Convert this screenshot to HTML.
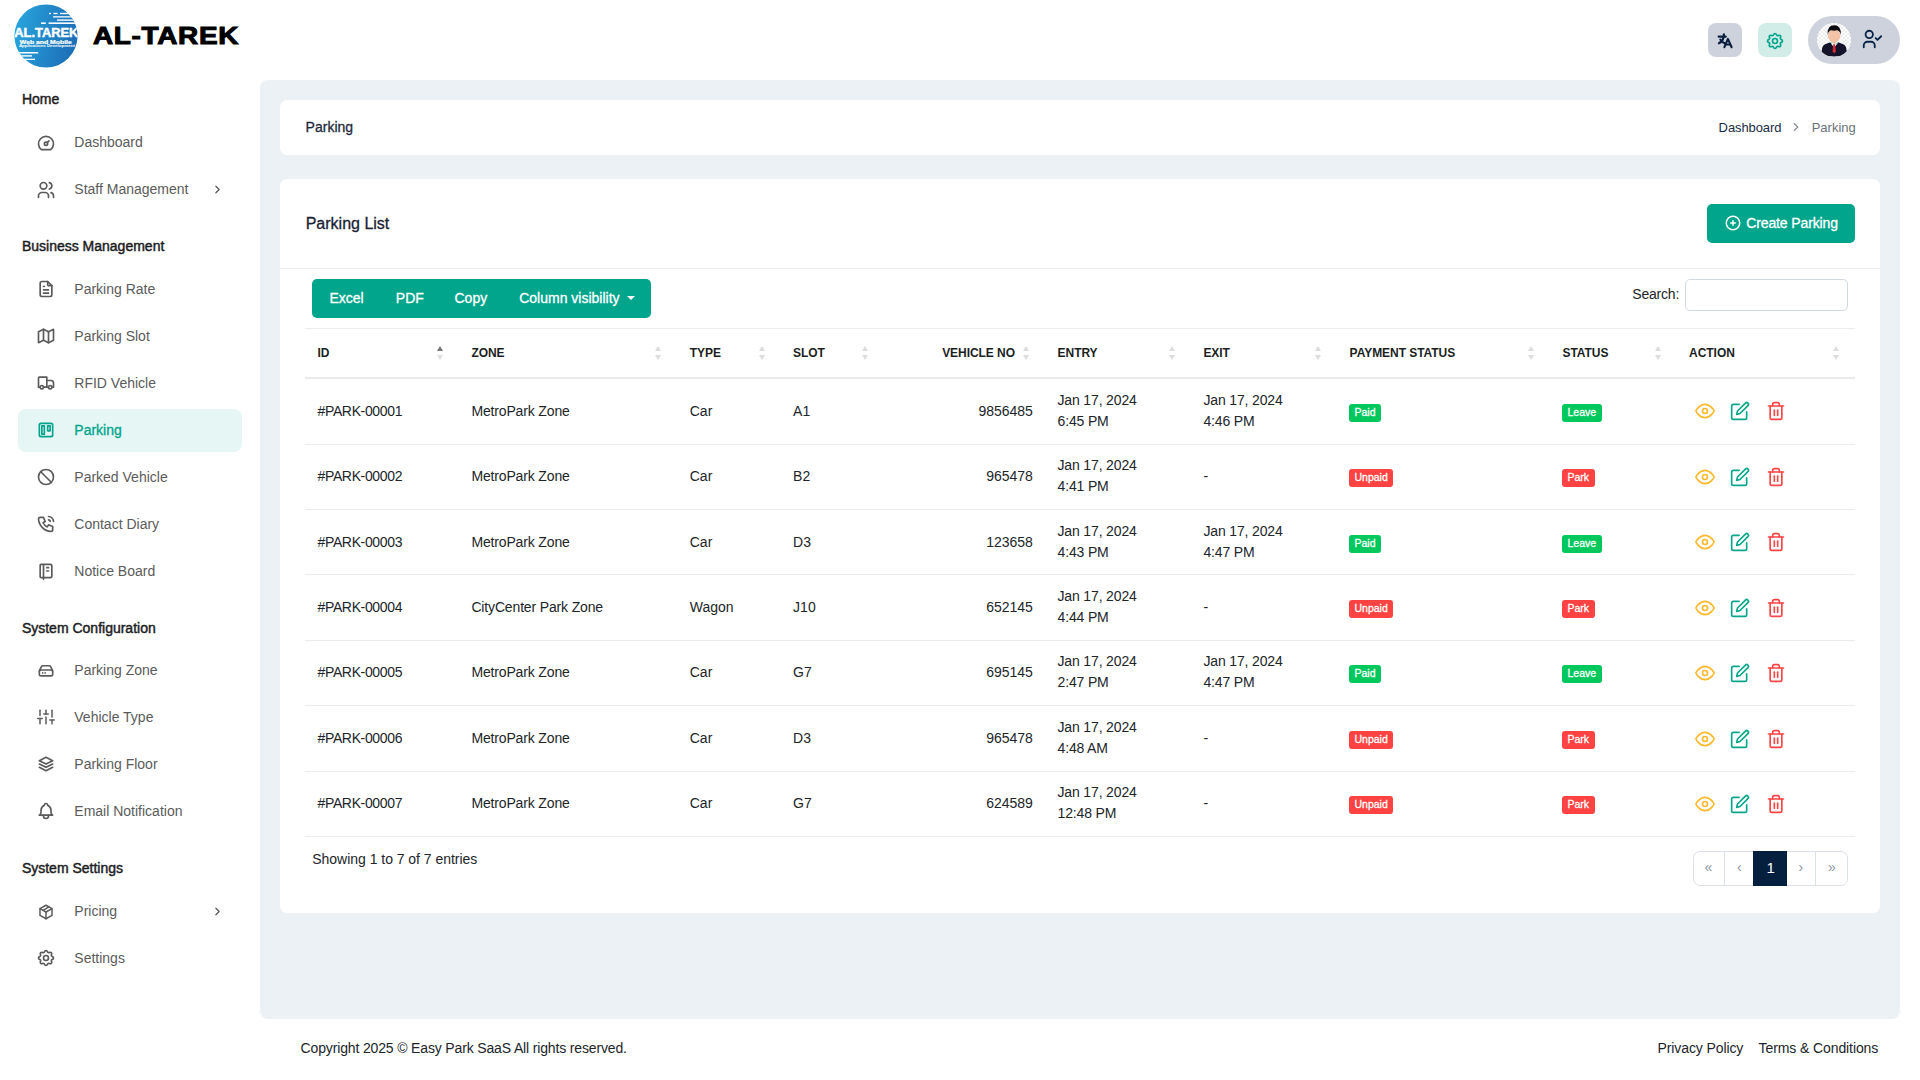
<!DOCTYPE html>
<html lang="en"><head><meta charset="utf-8"><title>Parking - Easy Park SaaS</title>
<style>
*{box-sizing:border-box;margin:0;padding:0}
html,body{width:1920px;height:1080px;overflow:hidden;background:#ffffff;font-family:"Liberation Sans",sans-serif;}
.abs{position:absolute}
.med{-webkit-text-stroke:0.3px currentColor}
</style></head><body>

<header class="topbar" style="display:contents">
<svg class="abs" style="left:14px;top:4px" width="64" height="64" viewBox="0 0 64 64">
<defs><linearGradient id="lg" x1="0" y1="0" x2="1" y2="0.2"><stop offset="0" stop-color="#2aa8df"/><stop offset="1" stop-color="#1c70b8"/></linearGradient>
<clipPath id="cc"><circle cx="32" cy="32" r="31.6"/></clipPath></defs>
<circle cx="32" cy="32" r="31.6" fill="url(#lg)"/>
<g clip-path="url(#cc)" fill="#ffffff">
<rect x="35" y="8.8" width="2" height="1.4"/><rect x="39.5" y="8.8" width="4.1" height="1.4"/><rect x="46" y="8.8" width="20" height="1.4"/>
<rect x="39.1" y="12.2" width="27" height="1.3"/><rect x="43" y="15.4" width="23" height="1.4"/>
<rect x="27" y="18.4" width="4.8" height="1.6"/><rect x="34.6" y="18.4" width="32" height="1.6"/>
<rect x="0" y="48" width="24.2" height="1.5"/><rect x="0" y="51.2" width="18" height="1.4"/><rect x="0" y="54.7" width="21" height="1.3"/>
</g>
<g clip-path="url(#cc)"><text x="32.3" y="33.2" text-anchor="middle" font-family="Liberation Sans" font-weight="700" font-size="13" fill="#ffffff" stroke="#ffffff" stroke-width="0.5" textLength="64" lengthAdjust="spacingAndGlyphs">AL.TAREK</text>
<text x="31.8" y="39.8" text-anchor="middle" font-family="Liberation Sans" font-weight="700" font-size="5" fill="#ffffff" stroke="#ffffff" stroke-width="0.2" textLength="52" lengthAdjust="spacingAndGlyphs">Web and Mobile</text>
<text x="32.9" y="42.9" text-anchor="middle" font-family="Liberation Sans" font-weight="700" font-size="2.8" fill="#ffffff" textLength="56" lengthAdjust="spacingAndGlyphs">Applications Development</text></g>
</svg>
<div class="abs" style="left:92.8px;top:23.6px;font-size:24.5px;line-height:24.5px;font-weight:700;color:#000;-webkit-text-stroke:1px #000;letter-spacing:0.6px;transform-origin:0 0;transform:scaleX(1.14);white-space:nowrap">AL-TAREK</div>
<div class="abs" style="left:1708px;top:23px;width:34px;height:34px;border-radius:8px;background:#ced2dc"></div>
<svg class="abs" style="left:1712px;top:28px" width="26" height="26" viewBox="0 0 26 26" fill="none" stroke="#0a1f3f" stroke-width="2.1" stroke-linecap="round" stroke-linejoin="round"><path d="M11.9 6.2v2"/><path d="M6.6 8.6h7.2"/><path d="M11.6 9.2Q10.6 13.6 6.9 15.3"/><path d="M8.3 11.6Q10 14.6 13.2 15.6"/><path d="M12.4 19.2L15.9 10.9L19.6 19.2"/><path d="M13.6 16.5h4.6"/></svg>
<div class="abs" style="left:1758px;top:23px;width:34px;height:34px;border-radius:8px;background:#d2ede8"></div>
<svg style="position:absolute;left:1765.00px;top:31.00px;" width="20" height="20" viewBox="0 0 24 24" fill="none" stroke="#00a58c" stroke-width="2" stroke-linecap="round" stroke-linejoin="round"><path d="M10.325 4.317c.426 -1.756 2.924 -1.756 3.35 0a1.724 1.724 0 0 0 2.573 1.066c1.543 -.94 3.31 .826 2.37 2.37a1.724 1.724 0 0 0 1.065 2.572c1.756 .426 1.756 2.924 0 3.35a1.724 1.724 0 0 0 -1.066 2.573c.94 1.543 -.826 3.31 -2.37 2.37a1.724 1.724 0 0 0 -2.572 1.065c-.426 1.756 -2.924 1.756 -3.35 0a1.724 1.724 0 0 0 -2.573 -1.066c-1.543 .94 -3.31 -.826 -2.37 -2.37a1.724 1.724 0 0 0 -1.065 -2.572c-1.756 -.426 -1.756 -2.924 0 -3.35a1.724 1.724 0 0 0 1.066 -2.573c-.94 -1.543 .826 -3.31 2.37 -2.37c1 .608 2.296 .07 2.572 -1.065z"/><path d="M9 12a3 3 0 1 0 6 0a3 3 0 0 0 -6 0"/></svg>
<div class="abs" style="left:1808px;top:16px;width:92px;height:48px;border-radius:24px;background:#ced2dc"></div>
<svg class="abs" style="left:1817px;top:23px" width="34" height="34" viewBox="0 0 34 34">
<defs><clipPath id="av"><circle cx="17" cy="17" r="17"/></clipPath>
<pattern id="chk" width="4" height="4" patternUnits="userSpaceOnUse"><rect width="4" height="4" fill="#ffffff"/><rect width="2" height="2" fill="#ededed"/><rect x="2" y="2" width="2" height="2" fill="#ededed"/></pattern></defs>
<circle cx="17" cy="17" r="17" fill="url(#chk)"/>
<g clip-path="url(#av)">
<rect x="14.4" y="15.5" width="5.6" height="5.5" fill="#e9b896"/>
<path d="M4 31.5 L5.3 24.5 Q6.3 21.2 10.8 20.2 L13.3 19.3 L17.2 24.5 L21.1 19.3 L23.6 20.2 Q28.1 21.2 29.1 24.5 L30.4 31.5 Q17.2 35.5 4 31.5 Z" fill="#15132a"/>
<path d="M13.3 19.3 L17.2 24.8 L21.1 19.3 L20 18.8 L17.2 21 L14.4 18.8 Z" fill="#e6f3f3"/>
<path d="M13.3 19.3 L15.2 22 L14.6 19.4 Z" fill="#5cc4c8"/><path d="M21.1 19.3 L19.2 22 L19.8 19.4 Z" fill="#5cc4c8"/>
<path d="M16.3 21.2 L18.1 21.2 L18.8 28.2 L17.2 30.6 L15.6 28.2 Z" fill="#d42a36"/>
<ellipse cx="17.2" cy="12.8" rx="6.2" ry="6.6" fill="#f2c4a5"/>
<path d="M10.7 12 Q9.8 2.2 17.2 2.2 Q24.6 2.2 23.7 12 Q23 7.8 20 7.3 Q17.2 8.2 14.2 7.3 Q11.4 7.8 10.7 12 Z" fill="#0c0c10"/>
</g></svg>
<svg style="position:absolute;left:1860.90px;top:28.00px;" width="22" height="22" viewBox="0 0 24 24" fill="none" stroke="#0a2447" stroke-width="2" stroke-linecap="round" stroke-linejoin="round"><path d="M9 7m-4 0a4 4 0 1 0 8 0a4 4 0 1 0 -8 0"/><path d="M3 21v-2a4 4 0 0 1 4 -4h4a4 4 0 0 1 4 4v2"/><path d="M16 11l2 2l4 -4"/></svg>
</header>
<aside class="sidebar" style="display:contents"><nav style="display:contents">
<div style="position:absolute;left:21.90px;top:92.25px;font-size:14px;line-height:14px;color:#1d1d1f;font-weight:400;white-space:nowrap;-webkit-text-stroke:0.45px currentColor">Home</div>
<div style="position:absolute;left:21.90px;top:238.75px;font-size:14px;line-height:14px;color:#1d1d1f;font-weight:400;white-space:nowrap;-webkit-text-stroke:0.45px currentColor">Business Management</div>
<div style="position:absolute;left:21.90px;top:620.95px;font-size:14px;line-height:14px;color:#1d1d1f;font-weight:400;white-space:nowrap;-webkit-text-stroke:0.45px currentColor">System Configuration</div>
<div style="position:absolute;left:21.90px;top:861.25px;font-size:14px;line-height:14px;color:#1d1d1f;font-weight:400;white-space:nowrap;-webkit-text-stroke:0.45px currentColor">System Settings</div>
<svg style="position:absolute;left:36.00px;top:132.70px;" width="20" height="20" viewBox="0 0 24 24" fill="none" stroke="#5b5b5b" stroke-width="2" stroke-linecap="round" stroke-linejoin="round"><path d="M12 13m-2 0a2 2 0 1 0 4 0a2 2 0 1 0 -4 0"/><path d="M13.45 11.55l2.05 -2.05"/><path d="M6.4 20a9 9 0 1 1 11.2 0z"/></svg>
<div style="position:absolute;left:74.30px;top:135.15px;font-size:14px;line-height:14px;color:#5b5b5b;font-weight:400;white-space:nowrap;">Dashboard</div>
<svg style="position:absolute;left:36.00px;top:179.70px;" width="20" height="20" viewBox="0 0 24 24" fill="none" stroke="#5b5b5b" stroke-width="2" stroke-linecap="round" stroke-linejoin="round"><path d="M9 7m-4 0a4 4 0 1 0 8 0a4 4 0 1 0 -8 0"/><path d="M3 21v-2a4 4 0 0 1 4 -4h4a4 4 0 0 1 4 4v2"/><path d="M16 3.13a4 4 0 0 1 0 7.75"/><path d="M21 21v-2a4 4 0 0 0 -3 -3.85"/></svg>
<div style="position:absolute;left:74.30px;top:182.15px;font-size:14px;line-height:14px;color:#5b5b5b;font-weight:400;white-space:nowrap;">Staff Management</div>
<svg style="position:absolute;left:210.80px;top:183.10px;" width="13" height="13" viewBox="0 0 24 24" fill="none" stroke="#555" stroke-width="2.2" stroke-linecap="round" stroke-linejoin="round"><path d="M9 6l6 6l-6 6"/></svg>
<svg style="position:absolute;left:36.00px;top:279.40px;" width="20" height="20" viewBox="0 0 24 24" fill="none" stroke="#5b5b5b" stroke-width="2" stroke-linecap="round" stroke-linejoin="round"><path d="M14 3v4a1 1 0 0 0 1 1h4"/><path d="M17 21h-10a2 2 0 0 1 -2 -2v-14a2 2 0 0 1 2 -2h7l5 5v11a2 2 0 0 1 -2 2z"/><path d="M9 9l1 0"/><path d="M9 13l6 0"/><path d="M9 17l6 0"/></svg>
<div style="position:absolute;left:74.30px;top:281.85px;font-size:14px;line-height:14px;color:#5b5b5b;font-weight:400;white-space:nowrap;">Parking Rate</div>
<svg style="position:absolute;left:36.00px;top:326.40px;" width="20" height="20" viewBox="0 0 24 24" fill="none" stroke="#5b5b5b" stroke-width="2" stroke-linecap="round" stroke-linejoin="round"><path d="M3 7l6 -3l6 3l6 -3v13l-6 3l-6 -3l-6 3v-13"/><path d="M9 4v13"/><path d="M15 7v13"/></svg>
<div style="position:absolute;left:74.30px;top:328.85px;font-size:14px;line-height:14px;color:#5b5b5b;font-weight:400;white-space:nowrap;">Parking Slot</div>
<svg style="position:absolute;left:36.00px;top:373.40px;" width="20" height="20" viewBox="0 0 24 24" fill="none" stroke="#5b5b5b" stroke-width="2" stroke-linecap="round" stroke-linejoin="round"><path d="M7 17m-2 0a2 2 0 1 0 4 0a2 2 0 1 0 -4 0"/><path d="M17 17m-2 0a2 2 0 1 0 4 0a2 2 0 1 0 -4 0"/><path d="M5 17h-2v-11a1 1 0 0 1 1 -1h9v12m-4 0h6m4 0h2v-5a3 3 0 0 0 -3 -3h-5"/></svg>
<div style="position:absolute;left:74.30px;top:375.85px;font-size:14px;line-height:14px;color:#5b5b5b;font-weight:400;white-space:nowrap;">RFID Vehicle</div>
<div class="abs" style="left:18px;top:409px;width:224px;height:42.5px;border-radius:8px;background:#e5f6f4"></div>
<svg style="position:absolute;left:36.00px;top:420.45px;" width="20" height="20" viewBox="0 0 24 24" fill="none" stroke="#00a58c" stroke-width="2" stroke-linecap="round" stroke-linejoin="round"><path d="M4 6a2 2 0 0 1 2 -2h12a2 2 0 0 1 2 2v12a2 2 0 0 1 -2 2h-12a2 2 0 0 1 -2 -2z"/><path d="M7 7h3v10h-3z"/><path d="M14 7h3v6h-3z"/></svg>
<div class="med" style="position:absolute;left:74.30px;top:422.90px;font-size:14px;line-height:14px;color:#00a58c;font-weight:400;white-space:nowrap;">Parking</div>
<svg style="position:absolute;left:36.00px;top:467.40px;" width="20" height="20" viewBox="0 0 24 24" fill="none" stroke="#5b5b5b" stroke-width="2" stroke-linecap="round" stroke-linejoin="round"><path d="M12 12m-9 0a9 9 0 1 0 18 0a9 9 0 1 0 -18 0"/><path d="M5.7 5.7l12.6 12.6"/></svg>
<div style="position:absolute;left:74.30px;top:469.85px;font-size:14px;line-height:14px;color:#5b5b5b;font-weight:400;white-space:nowrap;">Parked Vehicle</div>
<svg style="position:absolute;left:36.00px;top:514.40px;" width="20" height="20" viewBox="0 0 24 24" fill="none" stroke="#5b5b5b" stroke-width="2" stroke-linecap="round" stroke-linejoin="round"><path d="M5 4h4l2 5l-2.5 1.5a11 11 0 0 0 5 5l1.5 -2.5l5 2v4a2 2 0 0 1 -2 2a16 16 0 0 1 -15 -15a2 2 0 0 1 2 -2"/><path d="M15 7a2 2 0 0 1 2 2"/><path d="M15 3a6 6 0 0 1 6 6"/></svg>
<div style="position:absolute;left:74.30px;top:516.85px;font-size:14px;line-height:14px;color:#5b5b5b;font-weight:400;white-space:nowrap;">Contact Diary</div>
<svg style="position:absolute;left:36.00px;top:561.40px;" width="20" height="20" viewBox="0 0 24 24" fill="none" stroke="#5b5b5b" stroke-width="2" stroke-linecap="round" stroke-linejoin="round"><path d="M6 4h11a2 2 0 0 1 2 2v12a2 2 0 0 1 -2 2h-11a1 1 0 0 1 -1 -1v-14a1 1 0 0 1 1 -1m3 0v18"/><path d="M13 8l2 0"/><path d="M13 12l2 0"/></svg>
<div style="position:absolute;left:74.30px;top:563.85px;font-size:14px;line-height:14px;color:#5b5b5b;font-weight:400;white-space:nowrap;">Notice Board</div>
<svg style="position:absolute;left:36.00px;top:660.40px;" width="20" height="20" viewBox="0 0 24 24" fill="none" stroke="#5b5b5b" stroke-width="2" stroke-linecap="round" stroke-linejoin="round"><path d="M4 14a2 2 0 0 1 2 -2h12a2 2 0 0 1 2 2v3a2 2 0 0 1 -2 2h-12a2 2 0 0 1 -2 -2z"/><path d="M4 13l2.5 -5a2 2 0 0 1 1.8 -1.1h7.4a2 2 0 0 1 1.8 1.1l2.5 5"/><path d="M8 15.5v.01"/><path d="M11 15.5v.01"/></svg>
<div style="position:absolute;left:74.30px;top:662.85px;font-size:14px;line-height:14px;color:#5b5b5b;font-weight:400;white-space:nowrap;">Parking Zone</div>
<svg style="position:absolute;left:37.00px;top:708.40px;" width="18" height="18" viewBox="0 0 24 24" fill="none" stroke="#5b5b5b" stroke-width="2" stroke-linecap="round" stroke-linejoin="round"><path d="M4 21v-7"/><path d="M4 10v-7"/><path d="M12 21v-9"/><path d="M12 8v-5"/><path d="M20 21v-5"/><path d="M20 12v-9"/><path d="M1 14h6"/><path d="M9 8h6"/><path d="M17 16h6"/></svg>
<div style="position:absolute;left:74.30px;top:709.85px;font-size:14px;line-height:14px;color:#5b5b5b;font-weight:400;white-space:nowrap;">Vehicle Type</div>
<svg style="position:absolute;left:36.00px;top:754.40px;" width="20" height="20" viewBox="0 0 24 24" fill="none" stroke="#5b5b5b" stroke-width="2" stroke-linecap="round" stroke-linejoin="round"><path d="M12 4l-8 4l8 4l8 -4l-8 -4"/><path d="M4 12l8 4l8 -4"/><path d="M4 16l8 4l8 -4"/></svg>
<div style="position:absolute;left:74.30px;top:756.85px;font-size:14px;line-height:14px;color:#5b5b5b;font-weight:400;white-space:nowrap;">Parking Floor</div>
<svg style="position:absolute;left:36.00px;top:801.40px;" width="20" height="20" viewBox="0 0 24 24" fill="none" stroke="#5b5b5b" stroke-width="2" stroke-linecap="round" stroke-linejoin="round"><path d="M10 5a2 2 0 1 1 4 0a7 7 0 0 1 4 6v3a4 4 0 0 0 2 3h-16a4 4 0 0 0 2 -3v-3a7 7 0 0 1 4 -6"/><path d="M9 17v1a3 3 0 0 0 6 0v-1"/></svg>
<div style="position:absolute;left:74.30px;top:803.85px;font-size:14px;line-height:14px;color:#5b5b5b;font-weight:400;white-space:nowrap;">Email Notification</div>
<svg style="position:absolute;left:37.00px;top:902.50px;" width="18" height="18" viewBox="0 0 24 24" fill="none" stroke="#5b5b5b" stroke-width="2" stroke-linecap="round" stroke-linejoin="round"><path d="M12 3l8 4.5l0 9l-8 4.5l-8 -4.5l0 -9l8 -4.5"/><path d="M12 12l8 -4.5"/><path d="M12 12l0 9"/><path d="M12 12l-8 -4.5"/><path d="M16 5.25l-8 4.5"/></svg>
<div style="position:absolute;left:74.30px;top:903.95px;font-size:14px;line-height:14px;color:#5b5b5b;font-weight:400;white-space:nowrap;">Pricing</div>
<svg style="position:absolute;left:210.80px;top:904.90px;" width="13" height="13" viewBox="0 0 24 24" fill="none" stroke="#555" stroke-width="2.2" stroke-linecap="round" stroke-linejoin="round"><path d="M9 6l6 6l-6 6"/></svg>
<svg style="position:absolute;left:36.00px;top:948.20px;" width="20" height="20" viewBox="0 0 24 24" fill="none" stroke="#5b5b5b" stroke-width="2" stroke-linecap="round" stroke-linejoin="round"><path d="M10.325 4.317c.426 -1.756 2.924 -1.756 3.35 0a1.724 1.724 0 0 0 2.573 1.066c1.543 -.94 3.31 .826 2.37 2.37a1.724 1.724 0 0 0 1.065 2.572c1.756 .426 1.756 2.924 0 3.35a1.724 1.724 0 0 0 -1.066 2.573c.94 1.543 -.826 3.31 -2.37 2.37a1.724 1.724 0 0 0 -2.572 1.065c-.426 1.756 -2.924 1.756 -3.35 0a1.724 1.724 0 0 0 -2.573 -1.066c-1.543 .94 -3.31 -.826 -2.37 -2.37a1.724 1.724 0 0 0 -1.065 -2.572c-1.756 -.426 -1.756 -2.924 0 -3.35a1.724 1.724 0 0 0 1.066 -2.573c-.94 -1.543 .826 -3.31 2.37 -2.37c1 .608 2.296 .07 2.572 -1.065z"/><path d="M9 12a3 3 0 1 0 6 0a3 3 0 0 0 -6 0"/></svg>
<div style="position:absolute;left:74.30px;top:950.65px;font-size:14px;line-height:14px;color:#5b5b5b;font-weight:400;white-space:nowrap;">Settings</div>
</nav></aside>
<main class="content" style="display:contents">
<div class="abs" style="left:260px;top:80px;width:1640px;height:939px;border-radius:8px;background:#ecf1f5"></div>
<div class="abs" style="left:280px;top:100px;width:1600px;height:55px;border-radius:7px;background:#ffffff"></div>
<div class="med" style="position:absolute;left:305.60px;top:120.15px;font-size:14px;line-height:14px;color:#1e2a3b;font-weight:400;white-space:nowrap;">Parking</div>
<div style="position:absolute;left:1718.60px;top:120.70px;font-size:13px;line-height:13px;color:#1a2b45;font-weight:400;white-space:nowrap;letter-spacing:-0.1px">Dashboard</div>
<svg style="position:absolute;left:1789.00px;top:120.00px;" width="14" height="14" viewBox="0 0 24 24" fill="none" stroke="#8a8f98" stroke-width="2" stroke-linecap="round" stroke-linejoin="round"><path d="M9 6l6 6l-6 6"/></svg>
<div style="position:absolute;left:1811.70px;top:120.70px;font-size:13px;line-height:13px;color:#6c727b;font-weight:400;white-space:nowrap;">Parking</div>
<div class="abs" style="left:280px;top:179px;width:1600px;height:734px;border-radius:7px;background:#ffffff"></div>
<div class="med" style="position:absolute;left:305.70px;top:215.86px;font-size:16px;line-height:16px;color:#1a2233;font-weight:400;white-space:nowrap;">Parking List</div>
<div class="abs" style="left:1707px;top:204px;width:148px;height:39px;border-radius:5px;background:#00a58c"></div>
<svg style="position:absolute;left:1724.10px;top:214.00px;" width="18" height="18" viewBox="0 0 24 24" fill="none" stroke="#ffffff" stroke-width="2" stroke-linecap="round" stroke-linejoin="round"><path d="M3 12a9 9 0 1 0 18 0a9 9 0 0 0 -18 0"/><path d="M9 12h6"/><path d="M12 9v6"/></svg>
<div class="med" style="position:absolute;left:1746.20px;top:216.15px;font-size:14px;line-height:14px;color:#ffffff;font-weight:400;white-space:nowrap;letter-spacing:-0.12px">Create Parking</div>
<div class="abs" style="left:280px;top:268px;width:1600px;height:1px;background:#ececec"></div>
<div class="abs" style="left:312px;top:279px;width:339px;height:39px;border-radius:5px;background:#00a58c"></div>
<div class="med" style="position:absolute;left:329.50px;top:291.15px;font-size:14px;line-height:14px;color:#ffffff;font-weight:400;white-space:nowrap;">Excel</div>
<div class="med" style="position:absolute;left:395.80px;top:291.15px;font-size:14px;line-height:14px;color:#ffffff;font-weight:400;white-space:nowrap;">PDF</div>
<div class="med" style="position:absolute;left:454.50px;top:291.15px;font-size:14px;line-height:14px;color:#ffffff;font-weight:400;white-space:nowrap;">Copy</div>
<div class="med" style="position:absolute;left:519.20px;top:291.15px;font-size:14px;line-height:14px;color:#ffffff;font-weight:400;white-space:nowrap;">Column visibility</div>
<div class="abs" style="left:626.5px;top:295.5px;width:0;height:0;border-left:4px solid transparent;border-right:4px solid transparent;border-top:4.5px solid #fff"></div>
<div style="position:absolute;left:1632.25px;top:287.15px;font-size:14px;line-height:14px;color:#212529;font-weight:400;white-space:nowrap;letter-spacing:-0.2px">Search:</div>
<div class="abs" style="left:1685px;top:279px;width:163px;height:32px;border-radius:5px;border:1px solid #d3d9e0;background:#fff"></div>
<div class="abs" style="left:305px;top:328px;width:1550px;height:1px;background:#ececec"></div>
<div class="abs" style="left:305px;top:377px;width:1550px;height:2px;background:#eaeaea"></div>
<div class="abs" style="left:305px;top:444px;width:1550px;height:1px;background:#ebebeb"></div>
<div class="abs" style="left:305px;top:509px;width:1550px;height:1px;background:#ebebeb"></div>
<div class="abs" style="left:305px;top:574px;width:1550px;height:1px;background:#ebebeb"></div>
<div class="abs" style="left:305px;top:640px;width:1550px;height:1px;background:#ebebeb"></div>
<div class="abs" style="left:305px;top:705px;width:1550px;height:1px;background:#ebebeb"></div>
<div class="abs" style="left:305px;top:771px;width:1550px;height:1px;background:#ebebeb"></div>
<div class="abs" style="left:305px;top:836px;width:1550px;height:1px;background:#ebebeb"></div>
<div style="position:absolute;left:317.50px;top:347.04px;font-size:12px;line-height:12px;color:#1b1f24;font-weight:700;white-space:nowrap;letter-spacing:-0.05px">ID</div>
<div class="abs" style="left:437.20px;top:346.3px;width:0;height:0;border-left:3.2px solid transparent;border-right:3.2px solid transparent;border-bottom:5.5px solid #777777"></div>
<div class="abs" style="left:437.20px;top:355.2px;width:0;height:0;border-left:3.2px solid transparent;border-right:3.2px solid transparent;border-top:5.5px solid #dddddd"></div>
<div style="position:absolute;left:471.40px;top:347.04px;font-size:12px;line-height:12px;color:#1b1f24;font-weight:700;white-space:nowrap;letter-spacing:-0.05px">ZONE</div>
<div class="abs" style="left:655.20px;top:346.3px;width:0;height:0;border-left:3.2px solid transparent;border-right:3.2px solid transparent;border-bottom:5.5px solid #dddddd"></div>
<div class="abs" style="left:655.20px;top:355.2px;width:0;height:0;border-left:3.2px solid transparent;border-right:3.2px solid transparent;border-top:5.5px solid #dddddd"></div>
<div style="position:absolute;left:689.75px;top:347.04px;font-size:12px;line-height:12px;color:#1b1f24;font-weight:700;white-space:nowrap;letter-spacing:-0.05px">TYPE</div>
<div class="abs" style="left:758.80px;top:346.3px;width:0;height:0;border-left:3.2px solid transparent;border-right:3.2px solid transparent;border-bottom:5.5px solid #dddddd"></div>
<div class="abs" style="left:758.80px;top:355.2px;width:0;height:0;border-left:3.2px solid transparent;border-right:3.2px solid transparent;border-top:5.5px solid #dddddd"></div>
<div style="position:absolute;left:793.10px;top:347.04px;font-size:12px;line-height:12px;color:#1b1f24;font-weight:700;white-space:nowrap;letter-spacing:-0.05px">SLOT</div>
<div class="abs" style="left:861.60px;top:346.3px;width:0;height:0;border-left:3.2px solid transparent;border-right:3.2px solid transparent;border-bottom:5.5px solid #dddddd"></div>
<div class="abs" style="left:861.60px;top:355.2px;width:0;height:0;border-left:3.2px solid transparent;border-right:3.2px solid transparent;border-top:5.5px solid #dddddd"></div>
<div style="position:absolute;right:905.00px;top:347.04px;font-size:12px;line-height:12px;color:#1b1f24;font-weight:700;white-space:nowrap;letter-spacing:-0.05px">VEHICLE NO</div>
<div class="abs" style="left:1023.30px;top:346.3px;width:0;height:0;border-left:3.2px solid transparent;border-right:3.2px solid transparent;border-bottom:5.5px solid #dddddd"></div>
<div class="abs" style="left:1023.30px;top:355.2px;width:0;height:0;border-left:3.2px solid transparent;border-right:3.2px solid transparent;border-top:5.5px solid #dddddd"></div>
<div style="position:absolute;left:1057.60px;top:347.04px;font-size:12px;line-height:12px;color:#1b1f24;font-weight:700;white-space:nowrap;letter-spacing:-0.05px">ENTRY</div>
<div class="abs" style="left:1169.20px;top:346.3px;width:0;height:0;border-left:3.2px solid transparent;border-right:3.2px solid transparent;border-bottom:5.5px solid #dddddd"></div>
<div class="abs" style="left:1169.20px;top:355.2px;width:0;height:0;border-left:3.2px solid transparent;border-right:3.2px solid transparent;border-top:5.5px solid #dddddd"></div>
<div style="position:absolute;left:1203.40px;top:347.04px;font-size:12px;line-height:12px;color:#1b1f24;font-weight:700;white-space:nowrap;letter-spacing:-0.05px">EXIT</div>
<div class="abs" style="left:1315.40px;top:346.3px;width:0;height:0;border-left:3.2px solid transparent;border-right:3.2px solid transparent;border-bottom:5.5px solid #dddddd"></div>
<div class="abs" style="left:1315.40px;top:355.2px;width:0;height:0;border-left:3.2px solid transparent;border-right:3.2px solid transparent;border-top:5.5px solid #dddddd"></div>
<div style="position:absolute;left:1349.60px;top:347.04px;font-size:12px;line-height:12px;color:#1b1f24;font-weight:700;white-space:nowrap;letter-spacing:-0.05px">PAYMENT STATUS</div>
<div class="abs" style="left:1528.30px;top:346.3px;width:0;height:0;border-left:3.2px solid transparent;border-right:3.2px solid transparent;border-bottom:5.5px solid #dddddd"></div>
<div class="abs" style="left:1528.30px;top:355.2px;width:0;height:0;border-left:3.2px solid transparent;border-right:3.2px solid transparent;border-top:5.5px solid #dddddd"></div>
<div style="position:absolute;left:1562.50px;top:347.04px;font-size:12px;line-height:12px;color:#1b1f24;font-weight:700;white-space:nowrap;letter-spacing:-0.05px">STATUS</div>
<div class="abs" style="left:1654.70px;top:346.3px;width:0;height:0;border-left:3.2px solid transparent;border-right:3.2px solid transparent;border-bottom:5.5px solid #dddddd"></div>
<div class="abs" style="left:1654.70px;top:355.2px;width:0;height:0;border-left:3.2px solid transparent;border-right:3.2px solid transparent;border-top:5.5px solid #dddddd"></div>
<div style="position:absolute;left:1689.10px;top:347.04px;font-size:12px;line-height:12px;color:#1b1f24;font-weight:700;white-space:nowrap;letter-spacing:-0.05px">ACTION</div>
<div class="abs" style="left:1833.00px;top:346.3px;width:0;height:0;border-left:3.2px solid transparent;border-right:3.2px solid transparent;border-bottom:5.5px solid #dddddd"></div>
<div class="abs" style="left:1833.00px;top:355.2px;width:0;height:0;border-left:3.2px solid transparent;border-right:3.2px solid transparent;border-top:5.5px solid #dddddd"></div>
<div style="position:absolute;left:317.50px;top:403.95px;font-size:14px;line-height:14px;color:#212529;font-weight:400;white-space:nowrap;letter-spacing:-0.35px">#PARK-00001</div>
<div style="position:absolute;left:471.40px;top:403.95px;font-size:14px;line-height:14px;color:#212529;font-weight:400;white-space:nowrap;letter-spacing:-0.15px">MetroPark Zone</div>
<div style="position:absolute;left:689.75px;top:403.95px;font-size:14px;line-height:14px;color:#212529;font-weight:400;white-space:nowrap;">Car</div>
<div style="position:absolute;left:793.10px;top:403.95px;font-size:14px;line-height:14px;color:#212529;font-weight:400;white-space:nowrap;">A1</div>
<div style="position:absolute;right:887.10px;top:403.95px;font-size:14px;line-height:14px;color:#212529;font-weight:400;white-space:nowrap;">9856485</div>
<div style="position:absolute;left:1057.50px;top:392.95px;font-size:14px;line-height:14px;color:#212529;font-weight:400;white-space:nowrap;letter-spacing:-0.15px">Jan 17, 2024</div>
<div style="position:absolute;left:1057.50px;top:413.85px;font-size:14px;line-height:14px;color:#212529;font-weight:400;white-space:nowrap;letter-spacing:-0.15px">6:45 PM</div>
<div style="position:absolute;left:1203.40px;top:392.95px;font-size:14px;line-height:14px;color:#212529;font-weight:400;white-space:nowrap;letter-spacing:-0.15px">Jan 17, 2024</div>
<div style="position:absolute;left:1203.40px;top:413.85px;font-size:14px;line-height:14px;color:#212529;font-weight:400;white-space:nowrap;letter-spacing:-0.15px">4:46 PM</div>
<div class="abs" style="left:1349px;top:404.00px;height:18px;padding:0 5.5px;border-radius:3px;background:#00c85c;color:#fff;font-size:10.5px;line-height:16px;white-space:nowrap"><span style="-webkit-text-stroke:0.3px #fff">Paid</span></div>
<div class="abs" style="left:1562px;top:404.00px;height:18px;padding:0 5.5px;border-radius:3px;background:#00c85c;color:#fff;font-size:10.5px;line-height:16px;white-space:nowrap"><span style="-webkit-text-stroke:0.3px #fff">Leave</span></div>
<svg style="position:absolute;left:1695.00px;top:401.00px;" width="20" height="20" viewBox="0 0 24 24" fill="none" stroke="#ffb92c" stroke-width="2" stroke-linecap="round" stroke-linejoin="round"><path d="M1 12s4-8 11-8 11 8 11 8-4 8-11 8-11-8-11-8z"/><circle cx="12" cy="12" r="3"/></svg>
<svg style="position:absolute;left:1730.00px;top:401.00px;" width="20" height="20" viewBox="0 0 24 24" fill="none" stroke="#0aa68b" stroke-width="2" stroke-linecap="round" stroke-linejoin="round"><path d="M11 4H4a2 2 0 0 0-2 2v14a2 2 0 0 0 2 2h14a2 2 0 0 0 2-2v-7"/><path d="M18.5 2.5a2.121 2.121 0 0 1 3 3L12 15l-4 1 1-4 9.5-9.5z"/></svg>
<svg style="position:absolute;left:1766.10px;top:401.00px;" width="20" height="20" viewBox="0 0 24 24" fill="none" stroke="#ff4545" stroke-width="2" stroke-linecap="round" stroke-linejoin="round"><path d="M3 6h18"/><path d="M19 6v14a2 2 0 0 1-2 2H7a2 2 0 0 1-2-2V6m3 0V4a2 2 0 0 1 2-2h4a2 2 0 0 1 2 2v2"/><path d="M10 11v6"/><path d="M14 11v6"/></svg>
<div style="position:absolute;left:317.50px;top:469.28px;font-size:14px;line-height:14px;color:#212529;font-weight:400;white-space:nowrap;letter-spacing:-0.35px">#PARK-00002</div>
<div style="position:absolute;left:471.40px;top:469.28px;font-size:14px;line-height:14px;color:#212529;font-weight:400;white-space:nowrap;letter-spacing:-0.15px">MetroPark Zone</div>
<div style="position:absolute;left:689.75px;top:469.28px;font-size:14px;line-height:14px;color:#212529;font-weight:400;white-space:nowrap;">Car</div>
<div style="position:absolute;left:793.10px;top:469.28px;font-size:14px;line-height:14px;color:#212529;font-weight:400;white-space:nowrap;">B2</div>
<div style="position:absolute;right:887.10px;top:469.28px;font-size:14px;line-height:14px;color:#212529;font-weight:400;white-space:nowrap;">965478</div>
<div style="position:absolute;left:1057.50px;top:458.28px;font-size:14px;line-height:14px;color:#212529;font-weight:400;white-space:nowrap;letter-spacing:-0.15px">Jan 17, 2024</div>
<div style="position:absolute;left:1057.50px;top:479.18px;font-size:14px;line-height:14px;color:#212529;font-weight:400;white-space:nowrap;letter-spacing:-0.15px">4:41 PM</div>
<div style="position:absolute;left:1203.40px;top:469.28px;font-size:14px;line-height:14px;color:#212529;font-weight:400;white-space:nowrap;">-</div>
<div class="abs" style="left:1349px;top:469.33px;height:18px;padding:0 5.5px;border-radius:3px;background:#ff4242;color:#fff;font-size:10.5px;line-height:16px;white-space:nowrap"><span style="-webkit-text-stroke:0.3px #fff">Unpaid</span></div>
<div class="abs" style="left:1562px;top:469.33px;height:18px;padding:0 5.5px;border-radius:3px;background:#ff4242;color:#fff;font-size:10.5px;line-height:16px;white-space:nowrap"><span style="-webkit-text-stroke:0.3px #fff">Park</span></div>
<svg style="position:absolute;left:1695.00px;top:466.55px;" width="20" height="20" viewBox="0 0 24 24" fill="none" stroke="#ffb92c" stroke-width="2" stroke-linecap="round" stroke-linejoin="round"><path d="M1 12s4-8 11-8 11 8 11 8-4 8-11 8-11-8-11-8z"/><circle cx="12" cy="12" r="3"/></svg>
<svg style="position:absolute;left:1730.00px;top:466.55px;" width="20" height="20" viewBox="0 0 24 24" fill="none" stroke="#0aa68b" stroke-width="2" stroke-linecap="round" stroke-linejoin="round"><path d="M11 4H4a2 2 0 0 0-2 2v14a2 2 0 0 0 2 2h14a2 2 0 0 0 2-2v-7"/><path d="M18.5 2.5a2.121 2.121 0 0 1 3 3L12 15l-4 1 1-4 9.5-9.5z"/></svg>
<svg style="position:absolute;left:1766.10px;top:466.55px;" width="20" height="20" viewBox="0 0 24 24" fill="none" stroke="#ff4545" stroke-width="2" stroke-linecap="round" stroke-linejoin="round"><path d="M3 6h18"/><path d="M19 6v14a2 2 0 0 1-2 2H7a2 2 0 0 1-2-2V6m3 0V4a2 2 0 0 1 2-2h4a2 2 0 0 1 2 2v2"/><path d="M10 11v6"/><path d="M14 11v6"/></svg>
<div style="position:absolute;left:317.50px;top:534.62px;font-size:14px;line-height:14px;color:#212529;font-weight:400;white-space:nowrap;letter-spacing:-0.35px">#PARK-00003</div>
<div style="position:absolute;left:471.40px;top:534.62px;font-size:14px;line-height:14px;color:#212529;font-weight:400;white-space:nowrap;letter-spacing:-0.15px">MetroPark Zone</div>
<div style="position:absolute;left:689.75px;top:534.62px;font-size:14px;line-height:14px;color:#212529;font-weight:400;white-space:nowrap;">Car</div>
<div style="position:absolute;left:793.10px;top:534.62px;font-size:14px;line-height:14px;color:#212529;font-weight:400;white-space:nowrap;">D3</div>
<div style="position:absolute;right:887.10px;top:534.62px;font-size:14px;line-height:14px;color:#212529;font-weight:400;white-space:nowrap;">123658</div>
<div style="position:absolute;left:1057.50px;top:523.62px;font-size:14px;line-height:14px;color:#212529;font-weight:400;white-space:nowrap;letter-spacing:-0.15px">Jan 17, 2024</div>
<div style="position:absolute;left:1057.50px;top:544.52px;font-size:14px;line-height:14px;color:#212529;font-weight:400;white-space:nowrap;letter-spacing:-0.15px">4:43 PM</div>
<div style="position:absolute;left:1203.40px;top:523.62px;font-size:14px;line-height:14px;color:#212529;font-weight:400;white-space:nowrap;letter-spacing:-0.15px">Jan 17, 2024</div>
<div style="position:absolute;left:1203.40px;top:544.52px;font-size:14px;line-height:14px;color:#212529;font-weight:400;white-space:nowrap;letter-spacing:-0.15px">4:47 PM</div>
<div class="abs" style="left:1349px;top:534.67px;height:18px;padding:0 5.5px;border-radius:3px;background:#00c85c;color:#fff;font-size:10.5px;line-height:16px;white-space:nowrap"><span style="-webkit-text-stroke:0.3px #fff">Paid</span></div>
<div class="abs" style="left:1562px;top:534.67px;height:18px;padding:0 5.5px;border-radius:3px;background:#00c85c;color:#fff;font-size:10.5px;line-height:16px;white-space:nowrap"><span style="-webkit-text-stroke:0.3px #fff">Leave</span></div>
<svg style="position:absolute;left:1695.00px;top:532.10px;" width="20" height="20" viewBox="0 0 24 24" fill="none" stroke="#ffb92c" stroke-width="2" stroke-linecap="round" stroke-linejoin="round"><path d="M1 12s4-8 11-8 11 8 11 8-4 8-11 8-11-8-11-8z"/><circle cx="12" cy="12" r="3"/></svg>
<svg style="position:absolute;left:1730.00px;top:532.10px;" width="20" height="20" viewBox="0 0 24 24" fill="none" stroke="#0aa68b" stroke-width="2" stroke-linecap="round" stroke-linejoin="round"><path d="M11 4H4a2 2 0 0 0-2 2v14a2 2 0 0 0 2 2h14a2 2 0 0 0 2-2v-7"/><path d="M18.5 2.5a2.121 2.121 0 0 1 3 3L12 15l-4 1 1-4 9.5-9.5z"/></svg>
<svg style="position:absolute;left:1766.10px;top:532.10px;" width="20" height="20" viewBox="0 0 24 24" fill="none" stroke="#ff4545" stroke-width="2" stroke-linecap="round" stroke-linejoin="round"><path d="M3 6h18"/><path d="M19 6v14a2 2 0 0 1-2 2H7a2 2 0 0 1-2-2V6m3 0V4a2 2 0 0 1 2-2h4a2 2 0 0 1 2 2v2"/><path d="M10 11v6"/><path d="M14 11v6"/></svg>
<div style="position:absolute;left:317.50px;top:599.95px;font-size:14px;line-height:14px;color:#212529;font-weight:400;white-space:nowrap;letter-spacing:-0.35px">#PARK-00004</div>
<div style="position:absolute;left:471.40px;top:599.95px;font-size:14px;line-height:14px;color:#212529;font-weight:400;white-space:nowrap;letter-spacing:-0.15px">CityCenter Park Zone</div>
<div style="position:absolute;left:689.75px;top:599.95px;font-size:14px;line-height:14px;color:#212529;font-weight:400;white-space:nowrap;">Wagon</div>
<div style="position:absolute;left:793.10px;top:599.95px;font-size:14px;line-height:14px;color:#212529;font-weight:400;white-space:nowrap;">J10</div>
<div style="position:absolute;right:887.10px;top:599.95px;font-size:14px;line-height:14px;color:#212529;font-weight:400;white-space:nowrap;">652145</div>
<div style="position:absolute;left:1057.50px;top:588.95px;font-size:14px;line-height:14px;color:#212529;font-weight:400;white-space:nowrap;letter-spacing:-0.15px">Jan 17, 2024</div>
<div style="position:absolute;left:1057.50px;top:609.85px;font-size:14px;line-height:14px;color:#212529;font-weight:400;white-space:nowrap;letter-spacing:-0.15px">4:44 PM</div>
<div style="position:absolute;left:1203.40px;top:599.95px;font-size:14px;line-height:14px;color:#212529;font-weight:400;white-space:nowrap;">-</div>
<div class="abs" style="left:1349px;top:600.00px;height:18px;padding:0 5.5px;border-radius:3px;background:#ff4242;color:#fff;font-size:10.5px;line-height:16px;white-space:nowrap"><span style="-webkit-text-stroke:0.3px #fff">Unpaid</span></div>
<div class="abs" style="left:1562px;top:600.00px;height:18px;padding:0 5.5px;border-radius:3px;background:#ff4242;color:#fff;font-size:10.5px;line-height:16px;white-space:nowrap"><span style="-webkit-text-stroke:0.3px #fff">Park</span></div>
<svg style="position:absolute;left:1695.00px;top:597.65px;" width="20" height="20" viewBox="0 0 24 24" fill="none" stroke="#ffb92c" stroke-width="2" stroke-linecap="round" stroke-linejoin="round"><path d="M1 12s4-8 11-8 11 8 11 8-4 8-11 8-11-8-11-8z"/><circle cx="12" cy="12" r="3"/></svg>
<svg style="position:absolute;left:1730.00px;top:597.65px;" width="20" height="20" viewBox="0 0 24 24" fill="none" stroke="#0aa68b" stroke-width="2" stroke-linecap="round" stroke-linejoin="round"><path d="M11 4H4a2 2 0 0 0-2 2v14a2 2 0 0 0 2 2h14a2 2 0 0 0 2-2v-7"/><path d="M18.5 2.5a2.121 2.121 0 0 1 3 3L12 15l-4 1 1-4 9.5-9.5z"/></svg>
<svg style="position:absolute;left:1766.10px;top:597.65px;" width="20" height="20" viewBox="0 0 24 24" fill="none" stroke="#ff4545" stroke-width="2" stroke-linecap="round" stroke-linejoin="round"><path d="M3 6h18"/><path d="M19 6v14a2 2 0 0 1-2 2H7a2 2 0 0 1-2-2V6m3 0V4a2 2 0 0 1 2-2h4a2 2 0 0 1 2 2v2"/><path d="M10 11v6"/><path d="M14 11v6"/></svg>
<div style="position:absolute;left:317.50px;top:665.28px;font-size:14px;line-height:14px;color:#212529;font-weight:400;white-space:nowrap;letter-spacing:-0.35px">#PARK-00005</div>
<div style="position:absolute;left:471.40px;top:665.28px;font-size:14px;line-height:14px;color:#212529;font-weight:400;white-space:nowrap;letter-spacing:-0.15px">MetroPark Zone</div>
<div style="position:absolute;left:689.75px;top:665.28px;font-size:14px;line-height:14px;color:#212529;font-weight:400;white-space:nowrap;">Car</div>
<div style="position:absolute;left:793.10px;top:665.28px;font-size:14px;line-height:14px;color:#212529;font-weight:400;white-space:nowrap;">G7</div>
<div style="position:absolute;right:887.10px;top:665.28px;font-size:14px;line-height:14px;color:#212529;font-weight:400;white-space:nowrap;">695145</div>
<div style="position:absolute;left:1057.50px;top:654.28px;font-size:14px;line-height:14px;color:#212529;font-weight:400;white-space:nowrap;letter-spacing:-0.15px">Jan 17, 2024</div>
<div style="position:absolute;left:1057.50px;top:675.18px;font-size:14px;line-height:14px;color:#212529;font-weight:400;white-space:nowrap;letter-spacing:-0.15px">2:47 PM</div>
<div style="position:absolute;left:1203.40px;top:654.28px;font-size:14px;line-height:14px;color:#212529;font-weight:400;white-space:nowrap;letter-spacing:-0.15px">Jan 17, 2024</div>
<div style="position:absolute;left:1203.40px;top:675.18px;font-size:14px;line-height:14px;color:#212529;font-weight:400;white-space:nowrap;letter-spacing:-0.15px">4:47 PM</div>
<div class="abs" style="left:1349px;top:665.33px;height:18px;padding:0 5.5px;border-radius:3px;background:#00c85c;color:#fff;font-size:10.5px;line-height:16px;white-space:nowrap"><span style="-webkit-text-stroke:0.3px #fff">Paid</span></div>
<div class="abs" style="left:1562px;top:665.33px;height:18px;padding:0 5.5px;border-radius:3px;background:#00c85c;color:#fff;font-size:10.5px;line-height:16px;white-space:nowrap"><span style="-webkit-text-stroke:0.3px #fff">Leave</span></div>
<svg style="position:absolute;left:1695.00px;top:663.20px;" width="20" height="20" viewBox="0 0 24 24" fill="none" stroke="#ffb92c" stroke-width="2" stroke-linecap="round" stroke-linejoin="round"><path d="M1 12s4-8 11-8 11 8 11 8-4 8-11 8-11-8-11-8z"/><circle cx="12" cy="12" r="3"/></svg>
<svg style="position:absolute;left:1730.00px;top:663.20px;" width="20" height="20" viewBox="0 0 24 24" fill="none" stroke="#0aa68b" stroke-width="2" stroke-linecap="round" stroke-linejoin="round"><path d="M11 4H4a2 2 0 0 0-2 2v14a2 2 0 0 0 2 2h14a2 2 0 0 0 2-2v-7"/><path d="M18.5 2.5a2.121 2.121 0 0 1 3 3L12 15l-4 1 1-4 9.5-9.5z"/></svg>
<svg style="position:absolute;left:1766.10px;top:663.20px;" width="20" height="20" viewBox="0 0 24 24" fill="none" stroke="#ff4545" stroke-width="2" stroke-linecap="round" stroke-linejoin="round"><path d="M3 6h18"/><path d="M19 6v14a2 2 0 0 1-2 2H7a2 2 0 0 1-2-2V6m3 0V4a2 2 0 0 1 2-2h4a2 2 0 0 1 2 2v2"/><path d="M10 11v6"/><path d="M14 11v6"/></svg>
<div style="position:absolute;left:317.50px;top:730.62px;font-size:14px;line-height:14px;color:#212529;font-weight:400;white-space:nowrap;letter-spacing:-0.35px">#PARK-00006</div>
<div style="position:absolute;left:471.40px;top:730.62px;font-size:14px;line-height:14px;color:#212529;font-weight:400;white-space:nowrap;letter-spacing:-0.15px">MetroPark Zone</div>
<div style="position:absolute;left:689.75px;top:730.62px;font-size:14px;line-height:14px;color:#212529;font-weight:400;white-space:nowrap;">Car</div>
<div style="position:absolute;left:793.10px;top:730.62px;font-size:14px;line-height:14px;color:#212529;font-weight:400;white-space:nowrap;">D3</div>
<div style="position:absolute;right:887.10px;top:730.62px;font-size:14px;line-height:14px;color:#212529;font-weight:400;white-space:nowrap;">965478</div>
<div style="position:absolute;left:1057.50px;top:719.62px;font-size:14px;line-height:14px;color:#212529;font-weight:400;white-space:nowrap;letter-spacing:-0.15px">Jan 17, 2024</div>
<div style="position:absolute;left:1057.50px;top:740.52px;font-size:14px;line-height:14px;color:#212529;font-weight:400;white-space:nowrap;letter-spacing:-0.15px">4:48 AM</div>
<div style="position:absolute;left:1203.40px;top:730.62px;font-size:14px;line-height:14px;color:#212529;font-weight:400;white-space:nowrap;">-</div>
<div class="abs" style="left:1349px;top:730.67px;height:18px;padding:0 5.5px;border-radius:3px;background:#ff4242;color:#fff;font-size:10.5px;line-height:16px;white-space:nowrap"><span style="-webkit-text-stroke:0.3px #fff">Unpaid</span></div>
<div class="abs" style="left:1562px;top:730.67px;height:18px;padding:0 5.5px;border-radius:3px;background:#ff4242;color:#fff;font-size:10.5px;line-height:16px;white-space:nowrap"><span style="-webkit-text-stroke:0.3px #fff">Park</span></div>
<svg style="position:absolute;left:1695.00px;top:728.75px;" width="20" height="20" viewBox="0 0 24 24" fill="none" stroke="#ffb92c" stroke-width="2" stroke-linecap="round" stroke-linejoin="round"><path d="M1 12s4-8 11-8 11 8 11 8-4 8-11 8-11-8-11-8z"/><circle cx="12" cy="12" r="3"/></svg>
<svg style="position:absolute;left:1730.00px;top:728.75px;" width="20" height="20" viewBox="0 0 24 24" fill="none" stroke="#0aa68b" stroke-width="2" stroke-linecap="round" stroke-linejoin="round"><path d="M11 4H4a2 2 0 0 0-2 2v14a2 2 0 0 0 2 2h14a2 2 0 0 0 2-2v-7"/><path d="M18.5 2.5a2.121 2.121 0 0 1 3 3L12 15l-4 1 1-4 9.5-9.5z"/></svg>
<svg style="position:absolute;left:1766.10px;top:728.75px;" width="20" height="20" viewBox="0 0 24 24" fill="none" stroke="#ff4545" stroke-width="2" stroke-linecap="round" stroke-linejoin="round"><path d="M3 6h18"/><path d="M19 6v14a2 2 0 0 1-2 2H7a2 2 0 0 1-2-2V6m3 0V4a2 2 0 0 1 2-2h4a2 2 0 0 1 2 2v2"/><path d="M10 11v6"/><path d="M14 11v6"/></svg>
<div style="position:absolute;left:317.50px;top:795.95px;font-size:14px;line-height:14px;color:#212529;font-weight:400;white-space:nowrap;letter-spacing:-0.35px">#PARK-00007</div>
<div style="position:absolute;left:471.40px;top:795.95px;font-size:14px;line-height:14px;color:#212529;font-weight:400;white-space:nowrap;letter-spacing:-0.15px">MetroPark Zone</div>
<div style="position:absolute;left:689.75px;top:795.95px;font-size:14px;line-height:14px;color:#212529;font-weight:400;white-space:nowrap;">Car</div>
<div style="position:absolute;left:793.10px;top:795.95px;font-size:14px;line-height:14px;color:#212529;font-weight:400;white-space:nowrap;">G7</div>
<div style="position:absolute;right:887.10px;top:795.95px;font-size:14px;line-height:14px;color:#212529;font-weight:400;white-space:nowrap;">624589</div>
<div style="position:absolute;left:1057.50px;top:784.95px;font-size:14px;line-height:14px;color:#212529;font-weight:400;white-space:nowrap;letter-spacing:-0.15px">Jan 17, 2024</div>
<div style="position:absolute;left:1057.50px;top:805.85px;font-size:14px;line-height:14px;color:#212529;font-weight:400;white-space:nowrap;letter-spacing:-0.15px">12:48 PM</div>
<div style="position:absolute;left:1203.40px;top:795.95px;font-size:14px;line-height:14px;color:#212529;font-weight:400;white-space:nowrap;">-</div>
<div class="abs" style="left:1349px;top:796.00px;height:18px;padding:0 5.5px;border-radius:3px;background:#ff4242;color:#fff;font-size:10.5px;line-height:16px;white-space:nowrap"><span style="-webkit-text-stroke:0.3px #fff">Unpaid</span></div>
<div class="abs" style="left:1562px;top:796.00px;height:18px;padding:0 5.5px;border-radius:3px;background:#ff4242;color:#fff;font-size:10.5px;line-height:16px;white-space:nowrap"><span style="-webkit-text-stroke:0.3px #fff">Park</span></div>
<svg style="position:absolute;left:1695.00px;top:794.30px;" width="20" height="20" viewBox="0 0 24 24" fill="none" stroke="#ffb92c" stroke-width="2" stroke-linecap="round" stroke-linejoin="round"><path d="M1 12s4-8 11-8 11 8 11 8-4 8-11 8-11-8-11-8z"/><circle cx="12" cy="12" r="3"/></svg>
<svg style="position:absolute;left:1730.00px;top:794.30px;" width="20" height="20" viewBox="0 0 24 24" fill="none" stroke="#0aa68b" stroke-width="2" stroke-linecap="round" stroke-linejoin="round"><path d="M11 4H4a2 2 0 0 0-2 2v14a2 2 0 0 0 2 2h14a2 2 0 0 0 2-2v-7"/><path d="M18.5 2.5a2.121 2.121 0 0 1 3 3L12 15l-4 1 1-4 9.5-9.5z"/></svg>
<svg style="position:absolute;left:1766.10px;top:794.30px;" width="20" height="20" viewBox="0 0 24 24" fill="none" stroke="#ff4545" stroke-width="2" stroke-linecap="round" stroke-linejoin="round"><path d="M3 6h18"/><path d="M19 6v14a2 2 0 0 1-2 2H7a2 2 0 0 1-2-2V6m3 0V4a2 2 0 0 1 2-2h4a2 2 0 0 1 2 2v2"/><path d="M10 11v6"/><path d="M14 11v6"/></svg>
<div style="position:absolute;left:312.30px;top:851.85px;font-size:14px;line-height:14px;color:#212529;font-weight:400;white-space:nowrap;letter-spacing:-0.03px">Showing 1 to 7 of 7 entries</div>
<div class="abs" style="left:1693px;top:851px;width:155px;height:35px;border-radius:7px;border:1px solid #dbe0e6;background:#fff"></div>
<div class="abs" style="left:1724px;top:851px;width:1px;height:35px;background:#dbe0e6"></div>
<div class="abs" style="left:1815px;top:851px;width:1px;height:35px;background:#dbe0e6"></div>
<div class="abs" style="left:1753px;top:851px;width:34px;height:35px;background:#05203f"></div>
<div style="position:absolute;left:1766.50px;top:860.30px;font-size:15px;line-height:15px;color:#ffffff;font-weight:400;white-space:nowrap;">1</div>
<div style="position:absolute;left:1704.50px;top:860.15px;font-size:14px;line-height:14px;color:#8a94a3;font-weight:400;white-space:nowrap;">&laquo;</div>
<div style="position:absolute;left:1737.00px;top:860.15px;font-size:14px;line-height:14px;color:#8a94a3;font-weight:400;white-space:nowrap;">&lsaquo;</div>
<div style="position:absolute;left:1798.50px;top:860.15px;font-size:14px;line-height:14px;color:#8a94a3;font-weight:400;white-space:nowrap;">&rsaquo;</div>
<div style="position:absolute;left:1828.00px;top:860.15px;font-size:14px;line-height:14px;color:#8a94a3;font-weight:400;white-space:nowrap;">&raquo;</div>
</main>
<footer style="display:contents">
<div style="position:absolute;left:300.60px;top:1040.95px;font-size:14px;line-height:14px;color:#212529;font-weight:400;white-space:nowrap;letter-spacing:-0.15px">Copyright 2025 &copy; Easy Park SaaS All rights reserved.</div>
<div style="position:absolute;left:1657.50px;top:1040.95px;font-size:14px;line-height:14px;color:#212529;font-weight:400;white-space:nowrap;letter-spacing:-0.1px">Privacy Policy</div>
<div style="position:absolute;left:1758.60px;top:1040.95px;font-size:14px;line-height:14px;color:#212529;font-weight:400;white-space:nowrap;letter-spacing:-0.1px">Terms &amp; Conditions</div>
</footer>
</body></html>
